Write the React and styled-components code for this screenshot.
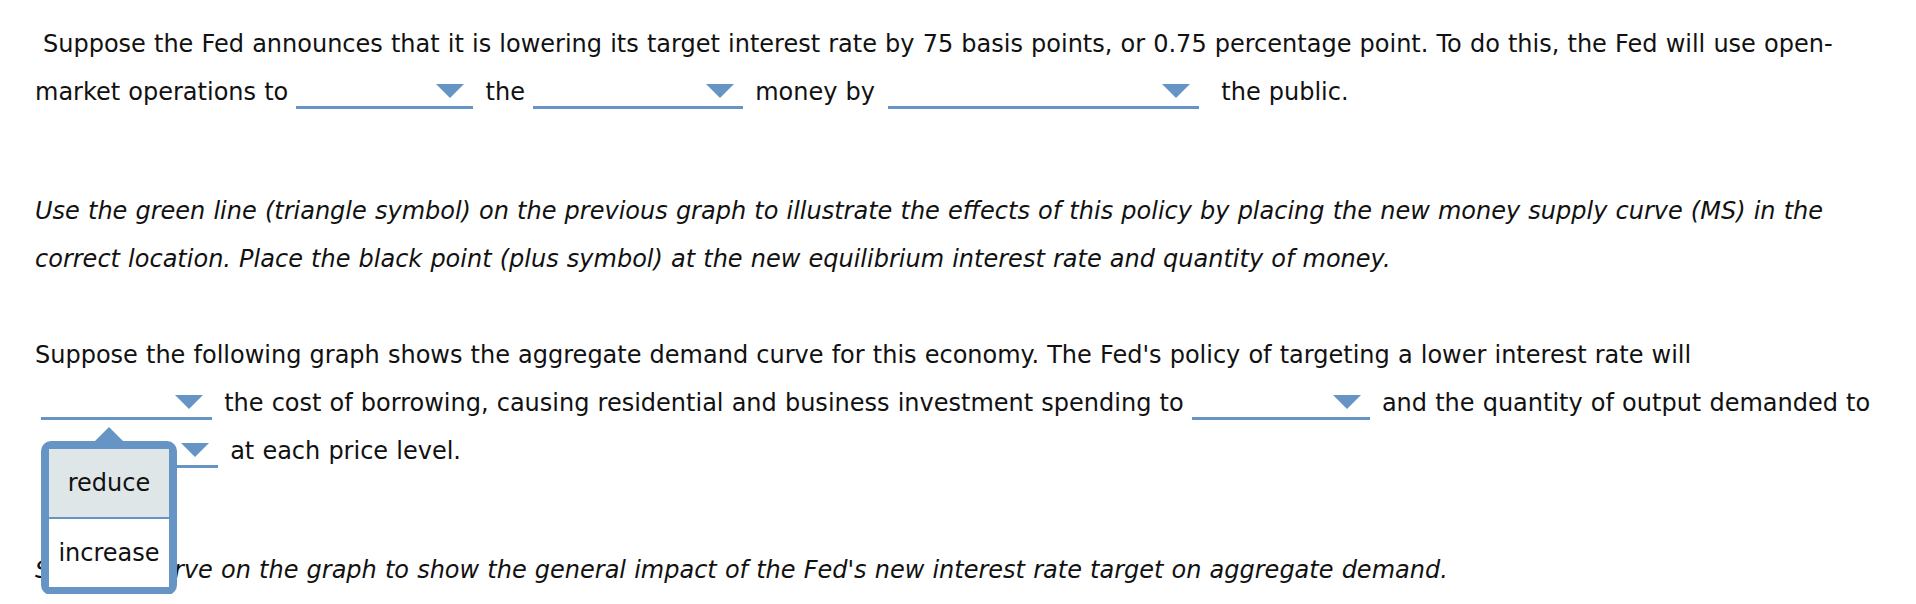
import styled, { createGlobalStyle } from 'styled-components';

const blue = '#6594c5';

const GlobalStyle = createGlobalStyle`
  body {
    margin: 0;
    background: #fff;
    color: #111;
    font-family: Verdana, 'DejaVu Sans', sans-serif;
    font-size: 24px;
    word-spacing: 0.5px;
  }
`;

const Page = styled.main`
  padding: 20px 43px 0 35px;
`;

const Para = styled.p`
  margin: ${(p) => p.$top || 0}px 0 0;
  line-height: 48px;
  font-style: ${(p) => (p.$italic ? 'italic' : 'normal')};
  text-indent: ${(p) => p.$indent || 0}px;
`;

const Select = styled.span`
  display: inline-block;
  position: relative;
  width: ${(p) => p.$width}px;
  height: 24px;
  margin-left: ${(p) => p.$lead || 0}px;
  margin-right: ${(p) => p.$trail ?? 4}px;
  border-bottom: 3px solid ${blue};
  vertical-align: -9px;
  text-indent: 0;
`;

const Caret = styled.span`
  display: block;
  width: 0;
  height: 0;
  margin: 2px 9px 0 auto;
  border-left: 14px solid transparent;
  border-right: 14px solid transparent;
  border-top: 14px solid ${blue};
`;

const Menu = styled.ul`
  position: absolute;
  top: calc(100% + 24px);
  left: 0;
  z-index: 2;
  width: 120px;
  margin: 0;
  padding: 0;
  list-style: none;
  background: #fff;
  border: 8px solid ${blue};
  border-radius: 10px;
  font-style: normal;

  &::before {
    content: '';
    position: absolute;
    top: -22px;
    left: 50%;
    transform: translateX(-50%);
    border-left: 14px solid transparent;
    border-right: 14px solid transparent;
    border-bottom: 14px solid ${blue};
  }
`;

const Option = styled.li`
  height: 68px;
  line-height: 68px;
  text-align: center;
  background: ${(p) => (p.$active ? '#dfe6e8' : '#fff')};

  & + & {
    border-top: 2px solid ${blue};
  }
`;

const Dropdown = ({ width, lead, trail, open, options = [] }) => (
  <Select $width={width} $lead={lead} $trail={trail}>
    <Caret />
    {open && (
      <Menu>
        {options.map((o, i) => (
          <Option key={o} $active={i === 0}>
            {o}
          </Option>
        ))}
      </Menu>
    )}
  </Select>
);

const App = () => {
  return (
    <>
      <GlobalStyle />
      <Page>
        <Para $indent={8}>
          Suppose the Fed announces that it is lowering its target interest rate by 75 basis
          points, or 0.75 percentage point. To do this, the Fed will use open-market operations
          to <Dropdown width={177} /> the <Dropdown width={210} /> money by{' '}
          <Dropdown width={311} lead={5} trail={14} /> the public.
        </Para>
        <Para $italic $top={71}>
          Use the green line (triangle symbol) on the previous graph to illustrate the effects of
          this policy by placing the new money supply curve (MS) in the correct location. Place
          the black point (plus symbol) at the new equilibrium interest rate and quantity of
          money.
        </Para>
        <Para $top={48}>
          Suppose the following graph shows the aggregate demand curve for this economy. The
          Fed's policy of targeting a lower interest rate will{' '}
          <Dropdown width={171} lead={6} open options={['reduce', 'increase']} /> the cost of
          borrowing, causing residential and business investment spending to{' '}
          <Dropdown width={178} /> and the quantity of output demanded to{' '}
          <Dropdown width={177} lead={6} /> at each price level.
        </Para>
        <Para $italic $top={71}>
          Shift the curve on the graph to show the general impact of the Fed's new interest rate
          target on aggregate demand.
        </Para>
      </Page>
    </>
  );
};

export default App;
